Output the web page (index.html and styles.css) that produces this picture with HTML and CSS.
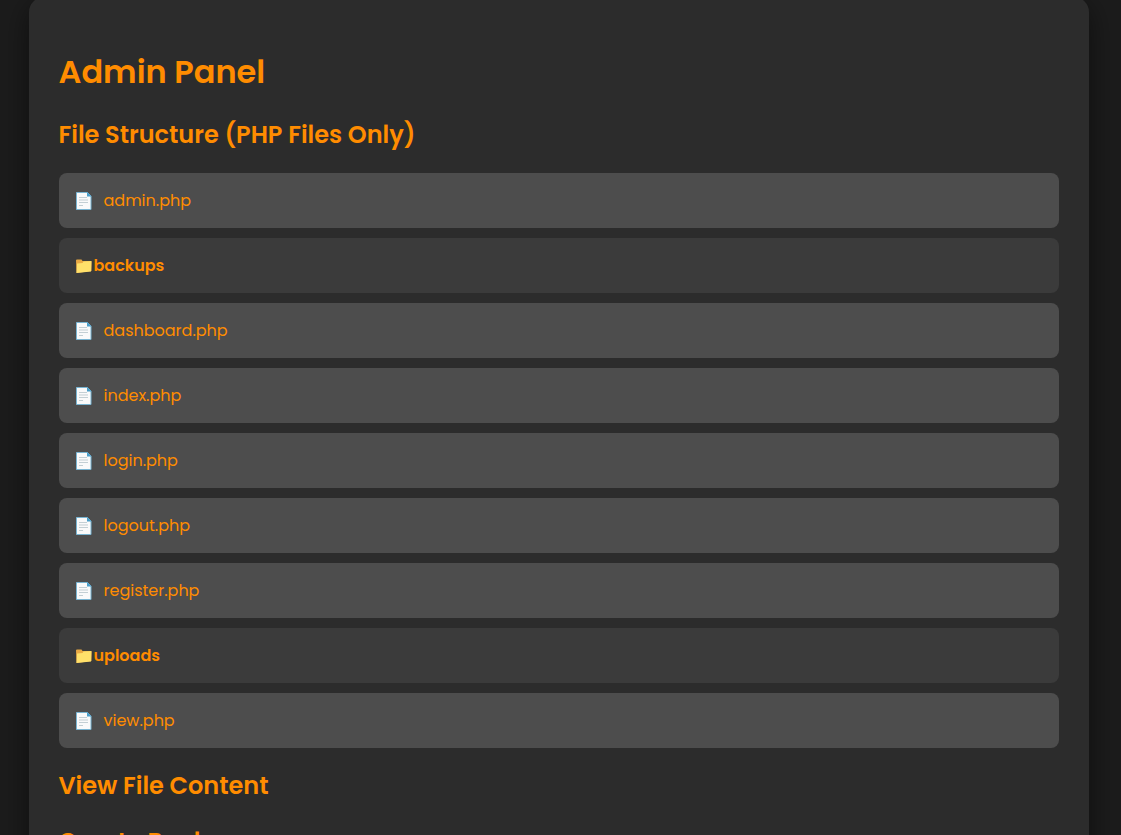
FILE: index.html
```html
<!DOCTYPE html>
<html lang="en">
<head>
    <meta charset="UTF-8">
    <meta name="viewport" content="width=device-width, initial-scale=1.0">
    <title>Admin Panel</title>
    <link rel="stylesheet" href="styles.css">
</head>
<body>
    <!-- Shared icons -->
    <svg class="sprite" aria-hidden="true">
        <symbol id="icon-file" viewBox="0 0 16 18">
            <path d="M0.5 0.5h11l3.500 3.500v13.500h-14.500z" fill="#fafafa" stroke="#78b4d2"/>
            <path d="M11 0v4.500h4.500z" fill="#4a9fca"/>
            <path d="M3 5.500h8M3 8h9M3 10.500h9M3 13.500h4" stroke="#c3cfd4" stroke-width="1" fill="none"/>
        </symbol>
        <symbol id="icon-folder" viewBox="0 0 16 18">
            <path d="M0 3.500q0-1 1-1h4.500l1 1.500h8q1 0 1 1v9l-15 2z" fill="#e9a944"/>
            <path d="M1 6.500l5.500-.5 1-1.500 8-.5-.5 10.500-14.500 1.500z" fill="#ffe06a"/>
        </symbol>
    </svg>

    <div class="container">
        <h1>Admin Panel</h1>

        <h2>File Structure (PHP Files Only)</h2>
        <ul class="file-list">
            <li class="file"><svg class="icon" aria-hidden="true"><use href="#icon-file"/></svg><a href="#admin.php">admin.php</a></li>
            <li class="folder"><svg class="icon" aria-hidden="true"><use href="#icon-folder"/></svg><strong>backups</strong></li>
            <li class="file"><svg class="icon" aria-hidden="true"><use href="#icon-file"/></svg><a href="#dashboard.php">dashboard.php</a></li>
            <li class="file"><svg class="icon" aria-hidden="true"><use href="#icon-file"/></svg><a href="#index.php">index.php</a></li>
            <li class="file"><svg class="icon" aria-hidden="true"><use href="#icon-file"/></svg><a href="#login.php">login.php</a></li>
            <li class="file"><svg class="icon" aria-hidden="true"><use href="#icon-file"/></svg><a href="#logout.php">logout.php</a></li>
            <li class="file"><svg class="icon" aria-hidden="true"><use href="#icon-file"/></svg><a href="#register.php">register.php</a></li>
            <li class="folder"><svg class="icon" aria-hidden="true"><use href="#icon-folder"/></svg><strong>uploads</strong></li>
            <li class="file"><svg class="icon" aria-hidden="true"><use href="#icon-file"/></svg><a href="#view.php">view.php</a></li>
        </ul>

        <h2>View File Content</h2>

        <h2>Create Backup</h2>
    </div>
</body>
</html>
```
FILE: styles.css
```css
body {
    font-family: Poppins, Inter, sans-serif;
    margin: 0;
    padding-right: 4px;
    background-color: #1c1c1c;
    color: #ff8c00;
}

.sprite {
    display: none;
}

.container {
    background-color: #2c2c2c;
    max-width: 1000px;
    margin: -3px auto 0;
    padding: 30px;
    border-radius: 15px;
    box-shadow: 0 8px 30px rgba(0, 0, 0, 0.5);
}

h1 {
    font-size: 32px;
    font-weight: 600;
    line-height: 48px;
    margin: 21px 0;
}

h2 {
    font-size: 24px;
    font-weight: 600;
    line-height: 36px;
    margin: 20px 0;
}

.file-list {
    list-style: none;
    margin: 0;
    padding: 0;
}

.file-list li {
    display: flex;
    align-items: center;
    padding: 15px;
    margin-bottom: 10px;
    border-radius: 8px;
    font-size: 16px;
    line-height: 25px;
}

.file {
    background-color: #4d4d4d;
}

.folder {
    background-color: #3b3b3b;
}

.icon {
    width: 16px;
    height: 18px;
    margin: 0 2px;
}

.file .icon {
    margin-right: 12px;
}

a {
    color: #ff8c00;
    text-decoration: none;
}

a:hover {
    text-decoration: underline;
}

strong {
    font-weight: 600;
}
```
